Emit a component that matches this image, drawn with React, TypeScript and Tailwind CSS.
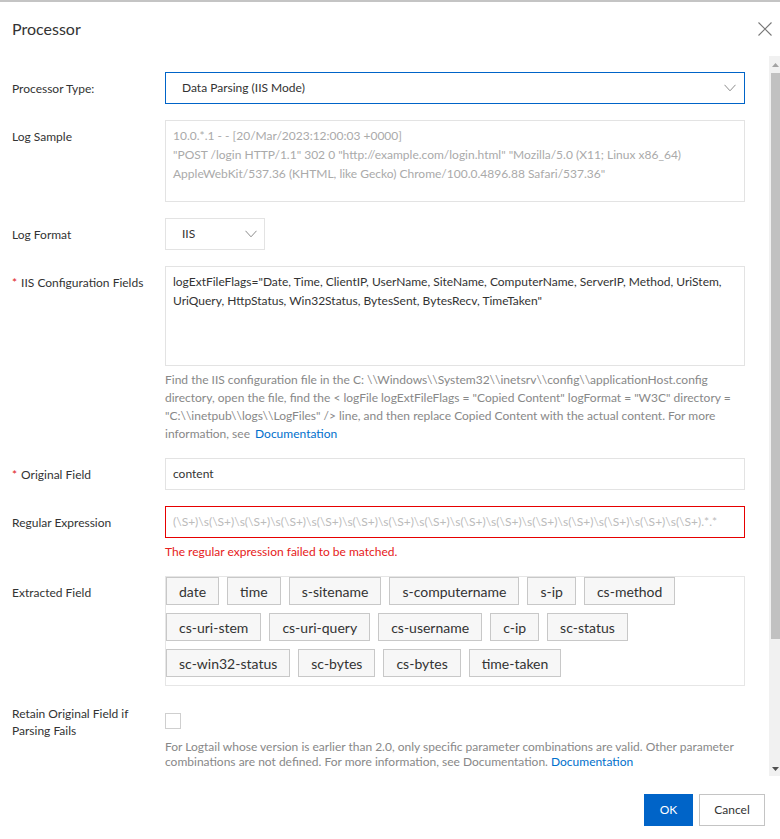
import React from "react";

function Chevron({ className = "" }: { className?: string }) {
  return (
    <svg width="12" height="8" viewBox="0 0 12 8" className={className} fill="none">
      <path d="M0.5 0.8 L6 6.8 L11.5 0.8" stroke="#8c8c8c" strokeWidth="1" />
    </svg>
  );
}

function Label({ children, required = false, className = "pt-[8px] leading-[18px]" }: { children: React.ReactNode; required?: boolean; className?: string }) {
  return (
    <div className={`w-[153px] shrink-0 text-[12px] text-[#333] ${className}`}>
      {required && <span className="text-[#e01818] mr-[4px]">*</span>}
      {children}
    </div>
  );
}

const tagRows = [
  ["date", "time", "s-sitename", "s-computername", "s-ip", "cs-method"],
  ["cs-uri-stem", "cs-uri-query", "cs-username", "c-ip", "sc-status"],
  ["sc-win32-status", "sc-bytes", "cs-bytes", "time-taken"],
];

export default function App() {
  const regex =
    "(\\S+)\\s(\\S+)\\s(\\S+)\\s(\\S+)\\s(\\S+)\\s(\\S+)\\s(\\S+)\\s(\\S+)\\s(\\S+)\\s(\\S+)\\s(\\S+)\\s(\\S+)\\s(\\S+)\\s(\\S+)\\s(\\S+).*.*";
  return (
    <div className="w-[780px] h-[839px] flex flex-col bg-white text-[#333] font-['Lato',sans-serif] overflow-hidden">
      <div className="h-[2px] bg-[#c4c4c4] shrink-0" />
      <header className="h-[54px] shrink-0 flex items-center justify-between pl-3 pr-[8px]">
        <h1 className="text-[16px] text-[#333] leading-none">Processor</h1>
        <svg width="14" height="14" viewBox="0 0 14 14" fill="none">
          <path d="M0.5 0.5 L13.5 13.5 M13.5 0.5 L0.5 13.5" stroke="#777" strokeWidth="1.1" />
        </svg>
      </header>

      <div className="flex h-[720px] shrink-0">
        <div className="flex-1 overflow-hidden pl-3 pr-[24px] pt-4">
          {/* Processor Type */}
          <div className="flex mb-4">
            <Label>Processor Type:</Label>
            <div className="w-[580px] h-8 border border-[#0064c8] flex items-center justify-between pl-4 pr-[8px] text-[12px] text-[#333]">
              <span>Data Parsing (IIS Mode)</span>
              <Chevron />
            </div>
          </div>

          {/* Log Sample */}
          <div className="flex mb-4">
            <Label>Log Sample</Label>
            <div className="w-[580px] h-[82px] border border-[#e3e3e3] pl-[7px] pt-[5px] text-[12px] leading-[19px] text-[#aaa] whitespace-nowrap overflow-hidden">
              10.0.*.1 - - [20/Mar/2023:12:00:03 +0000]
              <br />
              {'"POST /login HTTP/1.1" 302 0 "http://example.com/login.html" "Mozilla/5.0 (X11; Linux x86_64)'}
              <br />
              {'AppleWebKit/537.36 (KHTML, like Gecko) Chrome/100.0.4896.88 Safari/537.36"'}
            </div>
          </div>

          {/* Log Format */}
          <div className="flex mb-4">
            <Label>Log Format</Label>
            <div className="w-[100px] h-8 border border-[#e3e3e3] flex items-center justify-between pl-4 pr-[7px] text-[12px] text-[#333]">
              <span>IIS</span>
              <Chevron />
            </div>
          </div>

          {/* IIS Configuration Fields */}
          <div className="flex mb-[15px]">
            <Label required>IIS Configuration Fields</Label>
            <div className="w-[580px]">
              <div className="h-[100px] border border-[#e3e3e3] pl-[7px] pt-[5px] text-[12px] leading-[19px] text-[#333] whitespace-nowrap overflow-hidden">
                {'logExtFileFlags="Date, Time, ClientIP, UserName, SiteName, ComputerName, ServerIP, Method, UriStem,'}
                <br />
                {'UriQuery, HttpStatus, Win32Status, BytesSent, BytesRecv, TimeTaken"'}
              </div>
              <div className="mt-[5px] text-[12px] leading-[18px] text-[#888] whitespace-nowrap">
                {"Find the IIS configuration file in the C: \\\\Windows\\\\System32\\\\inetsrv\\\\config\\\\applicationHost.config"}
                <br />
                {'directory, open the file, find the < logFile logExtFileFlags = "Copied Content" logFormat = "W3C" directory ='}
                <br />
                {'"C:\\\\inetpub\\\\logs\\\\LogFiles" /> line, and then replace Copied Content with the actual content. For more'}
                <br />
                information, see <span className="text-[#0070cc] ml-[2px]">Documentation</span>
              </div>
            </div>
          </div>

          {/* Original Field */}
          <div className="flex mb-4">
            <Label required>Original Field</Label>
            <div className="w-[580px] h-8 border border-[#e3e3e3] flex items-center pl-[7px] text-[12px] text-[#333]">
              content
            </div>
          </div>

          {/* Regular Expression */}
          <div className="flex mb-[15px]">
            <Label>Regular Expression</Label>
            <div className="w-[580px]">
              <div className="h-8 border border-[#e60000] flex items-center pl-[7px] text-[12px] text-[#bbb] whitespace-nowrap overflow-hidden">
                {regex}
              </div>
              <div className="mt-[5px] text-[12px] leading-[18px] text-[#e62020]">
                The regular expression failed to be matched.
              </div>
            </div>
          </div>

          {/* Extracted Field */}
          <div className="flex mb-4">
            <Label>Extracted Field</Label>
            <div className="w-[580px] border border-[#e6e6e6]">
              {tagRows.map((row, i) => (
                <div key={i} className="flex">
                  {row.map((t) => (
                    <div
                      key={t}
                      className="h-[28px] px-3 mr-2 mb-2 flex items-center border border-[#c8c8c8] bg-[#f7f7f7] text-[14px] text-[#333]"
                    >
                      {t}
                    </div>
                  ))}
                </div>
              ))}
            </div>
          </div>

          {/* Retain Original Field */}
          <div className="flex">
            <Label className="pt-[3px] leading-[17px]">
              Retain Original Field if
              <br />
              Parsing Fails
            </Label>
            <div className="w-[580px]">
              <div className="mt-[11px] w-4 h-4 border border-[#cfcfcf] bg-white" />
              <div className="mt-[10px] text-[12px] leading-[15px] text-[#888] whitespace-nowrap">
                For Logtail whose version is earlier than 2.0, only specific parameter combinations are valid. Other parameter
                <br />
                combinations are not defined. For more information, see Documentation.{" "}
                <span className="text-[#0070cc]">Documentation</span>
              </div>
            </div>
          </div>
        </div>

        {/* Scrollbar */}
        <div className="w-[11px] shrink-0 bg-[#f1f1f1] flex flex-col items-end">
          <div className="h-[17px] w-[9px] flex items-center justify-center">
            <svg width="7" height="4" viewBox="0 0 7 4">
              <path d="M0 4 L3.5 0 L7 4 Z" fill="#a3a3a3" />
            </svg>
          </div>
          <div className="h-[566px] w-[9px] bg-[#c1c1c1]" />
          <div className="flex-1" />
          <div className="h-[14px] w-[9px] flex items-center justify-center">
            <svg width="7" height="4" viewBox="0 0 7 4">
              <path d="M0 0 L3.5 4 L7 0 Z" fill="#505050" />
            </svg>
          </div>
        </div>
      </div>

      <footer className="flex-1 flex justify-end items-start pt-[18px] pr-[15px] gap-[6px]">
        <button className="w-[49px] h-8 bg-[#0064c8] text-white text-[12px]">OK</button>
        <button className="w-[66px] h-8 border border-[#c4c4c4] bg-white text-[#333] text-[12px]">Cancel</button>
      </footer>
    </div>
  );
}
